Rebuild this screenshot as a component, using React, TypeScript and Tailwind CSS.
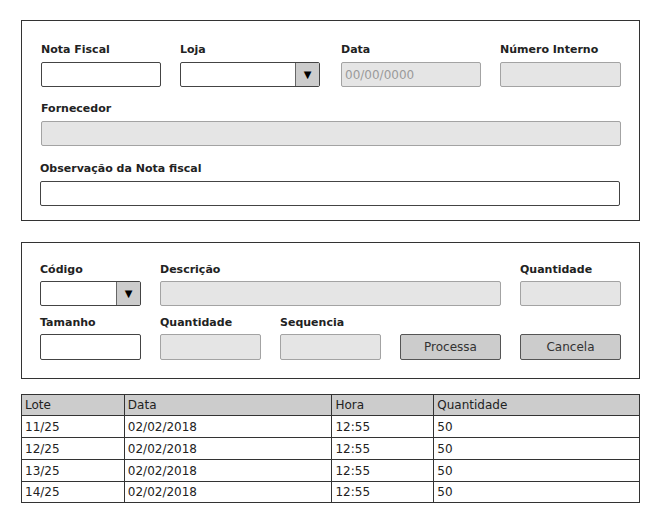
import React from "react";

const font = { fontFamily: '"DejaVu Sans", "Noto Sans", sans-serif' };

function Label({ children }: { children: React.ReactNode }) {
  return <div className="h-[16px] leading-[16px] text-[11px] font-bold text-[#222] whitespace-nowrap">{children}</div>;
}

function WhiteInput({ className = "" }: { className?: string }) {
  return <div className={`bg-white border border-[#444] rounded-[2px] ${className}`} />;
}

function GrayInput({ className = "", placeholder }: { className?: string; placeholder?: string }) {
  return (
    <div className={`bg-[#e5e5e5] border border-[#a3a3a3] rounded-[2px] flex items-center px-[3px] ${className}`}>
      {placeholder && <span className="text-[12px] text-[#9a9a9a]">{placeholder}</span>}
    </div>
  );
}

function Select({ className = "" }: { className?: string }) {
  return (
    <div className={`h-[25px] bg-white border border-[#444] rounded-[2px] flex ${className}`}>
      <div className="flex-1" />
      <div className="w-[24px] bg-[#cccccc] border-l border-[#666] flex items-center justify-center text-[10px] text-black">▼</div>
    </div>
  );
}

function Button({ children }: { children: React.ReactNode }) {
  return (
    <div className="h-[26px] bg-[#cccccc] border border-[#555] rounded-[2px] flex items-center justify-center text-[12px] text-[#333]">
      {children}
    </div>
  );
}

const rows = [
  ["11/25", "02/02/2018", "12:55", "50"],
  ["12/25", "02/02/2018", "12:55", "50"],
  ["13/25", "02/02/2018", "12:55", "50"],
  ["14/25", "02/02/2018", "12:55", "50"],
];

export default function App() {
  return (
    <div className="w-[660px] h-[523px] bg-white px-[21px] pt-[20px]" style={font}>
      {/* Nota fiscal */}
      <div className="w-[619px] border border-[#333] pt-[21px] pl-[19px] pb-[14px]">
        <div className="flex">
          <div className="w-[120px]">
            <Label>Nota Fiscal</Label>
            <WhiteInput className="mt-[4px] h-[25px]" />
          </div>
          <div className="w-[140px] ml-[19px]">
            <Label>Loja</Label>
            <Select className="mt-[4px]" />
          </div>
          <div className="w-[140px] ml-[21px]">
            <Label>Data</Label>
            <GrayInput className="mt-[4px] h-[25px]" placeholder="00/00/0000" />
          </div>
          <div className="w-[121px] ml-[19px]">
            <Label>Número Interno</Label>
            <GrayInput className="mt-[4px] h-[25px]" />
          </div>
        </div>
        <div className="w-[580px] mt-[14px]">
          <Label>Fornecedor</Label>
          <GrayInput className="mt-[4px] h-[25px]" />
        </div>
        <div className="w-[580px] mt-[15px] -ml-px">
          <Label>Observação da Nota fiscal</Label>
          <WhiteInput className="mt-[4px] h-[25px]" />
        </div>
      </div>

      {/* Itens */}
      <div className="w-[619px] border border-[#333] mt-[21px] pt-[19px] pl-[18px] pb-[18px]">
        <div className="grid grid-cols-[101px_101px_101px_101px_101px] gap-x-[19px]">
          <div>
            <Label>Código</Label>
            <Select className="mt-[3px]" />
          </div>
          <div className="col-span-3">
            <Label>Descrição</Label>
            <GrayInput className="mt-[3px] h-[25px]" />
          </div>
          <div>
            <Label>Quantidade</Label>
            <GrayInput className="mt-[3px] h-[25px]" />
          </div>
        </div>
        <div className="grid grid-cols-[101px_101px_101px_101px_101px] gap-x-[19px] mt-[9px] items-end">
          <div>
            <Label>Tamanho</Label>
            <WhiteInput className="mt-[3px] h-[26px]" />
          </div>
          <div>
            <Label>Quantidade</Label>
            <GrayInput className="mt-[3px] h-[26px]" />
          </div>
          <div>
            <Label>Sequencia</Label>
            <GrayInput className="mt-[3px] h-[26px]" />
          </div>
          <Button>Processa</Button>
          <Button>Cancela</Button>
        </div>
      </div>

      {/* Tabela */}
      <table className="w-[619px] mt-[15px] border-collapse text-[12px] leading-[14px] text-[#222]">
        <colgroup>
          <col className="w-[103px]" />
          <col className="w-[208px]" />
          <col className="w-[102px]" />
          <col className="w-[206px]" />
        </colgroup>
        <thead>
          <tr className="h-[21px] bg-[#cccccc]">
            {["Lote", "Data", "Hora", "Quantidade"].map((h) => (
              <th key={h} className="border border-[#333] text-left font-normal px-[3px] py-0">{h}</th>
            ))}
          </tr>
        </thead>
        <tbody>
          {rows.map((r, i) => (
            <tr key={i} className={i === rows.length - 1 ? "h-[21px]" : "h-[22px]"}>
              {r.map((c, j) => (
                <td key={j} className="border border-[#333] px-[3px] py-0">{c}</td>
              ))}
            </tr>
          ))}
        </tbody>
      </table>
    </div>
  );
}
